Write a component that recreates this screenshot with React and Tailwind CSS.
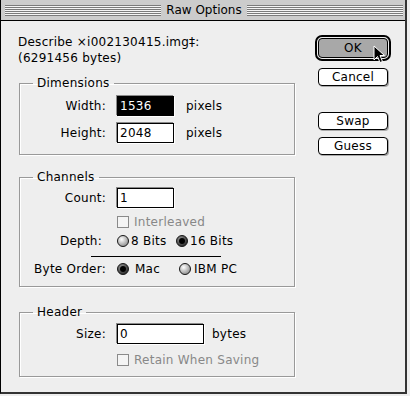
import { useId } from 'react';

const Radio = ({ on }) => {
    const id = useId();
    return (
        <svg width="12" height="12" viewBox="0 0 12 12" className="shrink-0">
            <defs>
                <radialGradient id={id} cx="38%" cy="35%" r="70%">
                    <stop offset="0" stopColor={on ? '#9a9a9a' : '#ffffff'} />
                    <stop offset="1" stopColor={on ? '#222222' : '#8a8a8a'} />
                </radialGradient>
            </defs>
            <circle cx="6" cy="6" r="5.5" fill={`url(#${id})`} stroke="#1a1a1a" strokeWidth="1" />
            {on && <circle cx="6" cy="6" r="3" fill="#000" />}
        </svg>
    );
};

const Checkbox = () => (
    <span className="w-[12px] h-[12px] border border-[#8a8a8a] bg-[#f4f4f4] shrink-0" />
);

const Field = ({ value, width, selected }) => (
    <div
        className={`h-[20px] border border-black pl-[2px] flex items-center shadow-[-1px_-1px_0_#8a8a8a,1px_1px_0_#ffffff] ${width} ${selected ? 'bg-black text-white' : 'bg-white text-black'}`}
    >
        {value}
    </div>
);

const Group = ({ title, className = '', children }) => (
    <fieldset className={`ml-[1px] w-[276px] border border-[#999] shadow-[1px_1px_0_#ffffff,inset_1px_1px_0_#ffffff] ${className}`}>
        <legend className="ml-[13px] px-[4px] leading-[16px]">{title}</legend>
        {children}
    </fieldset>
);

const Label = ({ children, className = '' }) => (
    <span className={`w-[86px] text-right shrink-0 ${className}`}>{children}</span>
);

const Button = ({ children, className = '' }) => (
    <div className={`ml-[3px] w-[70px] h-[18px] border border-black rounded-[4px] bg-white flex items-center justify-center shadow-[1px_1px_0_#aaaaaa] ${className}`}>
        {children}
    </div>
);

const Stripes = () => (
    <div className="flex-1 h-[11px] bg-[repeating-linear-gradient(to_bottom,#7a7a7a_0,#7a7a7a_1px,#f4f4f4_1px,#f4f4f4_2px)]" />
);

export default function App() {
    return (
        <div className="w-[410px] h-[396px] bg-[#eeeeee] font-['DejaVu_Sans',sans-serif] text-[12px] leading-[16px] tracking-[0.25px] text-black">
            <div className="relative w-[407px] h-[394px] bg-[#eeeeee] border-l border-black border-r-2 border-r-[#333] border-b-2 border-b-[#333] flex flex-col">
                {/* Title bar */}
                <div className="h-[21px] bg-[#cccccc] border-b border-black flex items-center pl-[4px] pr-[2px]">
                    <Stripes />
                    <span className="px-[5px] tracking-normal">Raw Options</span>
                    <Stripes />
                </div>

                <div className="flex pt-[13px] pl-[17px]">
                    {/* Left column */}
                    <div className="w-[278px]">
                        <p>Describe ×i002130415.img‡:</p>
                        <p>(6291456 bytes)</p>

                        <Group title="Dimensions" className="mt-[9px] pt-[5px] pb-[11px]">
                            <div className="flex items-center">
                                <Label>Width:</Label>
                                <div className="ml-[11px]"><Field value="1536" width="w-[57px]" selected /></div>
                                <span className="ml-[12px]">pixels</span>
                            </div>
                            <div className="flex items-center mt-[7px]">
                                <Label>Height:</Label>
                                <div className="ml-[11px]"><Field value="2048" width="w-[57px]" /></div>
                                <span className="ml-[12px]">pixels</span>
                            </div>
                        </Group>

                        <Group title="Channels" className="mt-[14px] pt-[3px] pb-[9px]">
                            <div className="flex items-center">
                                <Label>Count:</Label>
                                <div className="ml-[11px]"><Field value="1" width="w-[57px]" /></div>
                            </div>
                            <div className="flex items-center h-[16px] mt-[6px] pl-[97px] text-[#888]">
                                <Checkbox />
                                <span className="ml-[5px]">Interleaved</span>
                            </div>
                            <div className="flex items-center h-[16px] mt-[3px]">
                                <Label className="pr-[4px]">Depth:</Label>
                                <div className="ml-[11px] flex items-center w-[59px]">
                                    <Radio />
                                    <span className="ml-[2px]">8 Bits</span>
                                </div>
                                <div className="flex items-center">
                                    <Radio on />
                                    <span className="ml-[2px]">16 Bits</span>
                                </div>
                            </div>
                            <div className="ml-[71px] mt-[7px] w-[130px] h-[1px] bg-black" />
                            <div className="flex items-center h-[16px] mt-[4px]">
                                <Label>Byte Order:</Label>
                                <div className="ml-[11px] flex items-center w-[62px]">
                                    <Radio on />
                                    <span className="ml-[6px]">Mac</span>
                                </div>
                                <div className="flex items-center">
                                    <Radio />
                                    <span className="ml-[3px]">IBM PC</span>
                                </div>
                            </div>
                        </Group>

                        <Group title="Header" className="mt-[17px] pt-[4px] pb-[8px]">
                            <div className="flex items-center">
                                <Label>Size:</Label>
                                <div className="ml-[11px]"><Field value="0" width="w-[87px]" /></div>
                                <span className="ml-[8px]">bytes</span>
                            </div>
                            <div className="flex items-center h-[16px] mt-[8px] pl-[97px] text-[#888]">
                                <Checkbox />
                                <span className="ml-[5px]">Retain When Saving</span>
                            </div>
                        </Group>
                    </div>

                    {/* Right column */}
                    <div className="ml-[19px] mt-[1px] flex flex-col">
                        <div className="w-[76px] h-[26px] border-2 border-black rounded-[7px] p-[1px] bg-[#eeeeee]">
                            <div className="w-full h-full border border-black rounded-[4px] bg-[#a8a8a8] flex items-center justify-center">
                                OK
                            </div>
                        </div>
                        <Button className="mt-[7px]">Cancel</Button>
                        <Button className="mt-[26px]">Swap</Button>
                        <Button className="mt-[7px]">Guess</Button>
                    </div>
                </div>

                {/* Mouse pointer over OK */}
                <svg className="absolute left-[372px] top-[45px]" width="13" height="19" viewBox="0 0 13 19">
                    <path d="M1 1 L1 15 L4.5 11.5 L7 17.5 L9.5 16.5 L7 10.5 L11.5 10.5 Z" fill="#000" stroke="#fff" strokeWidth="1" strokeLinejoin="miter" />
                </svg>
            </div>
        </div>
    );
}
